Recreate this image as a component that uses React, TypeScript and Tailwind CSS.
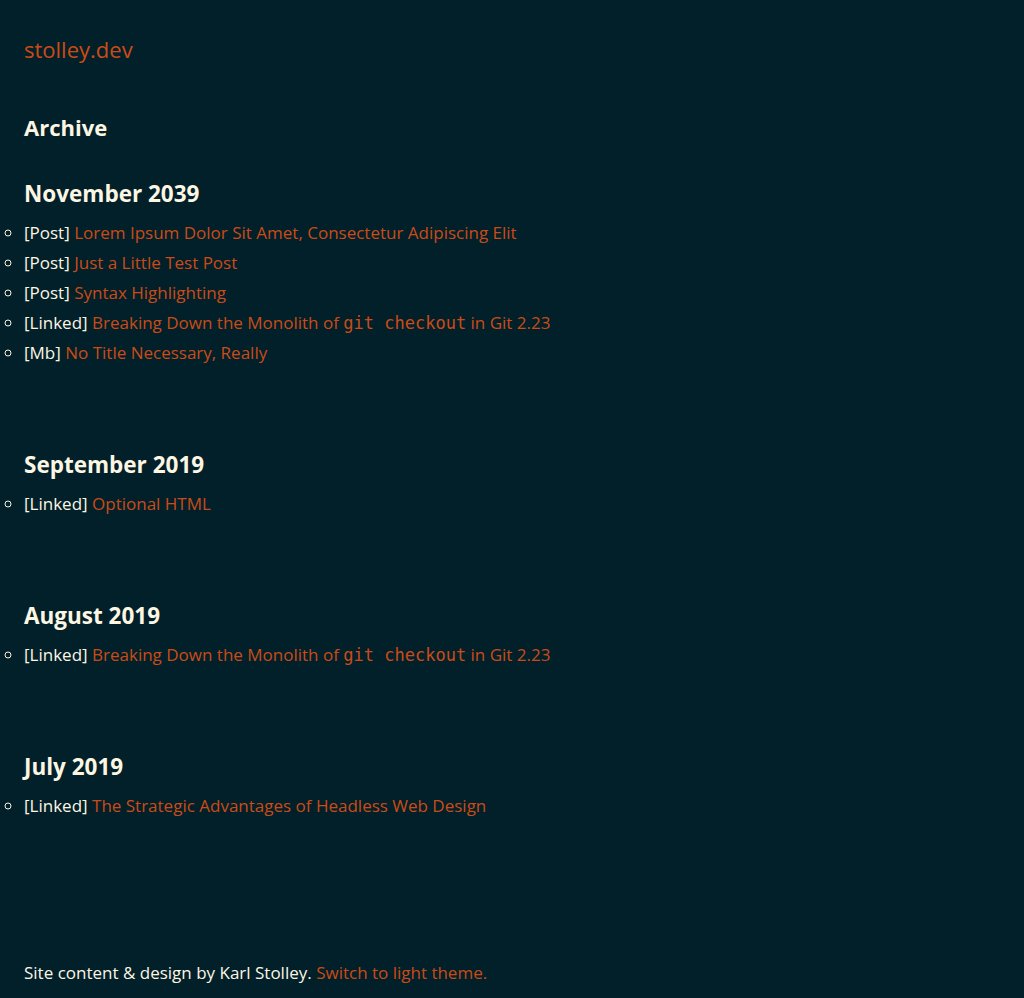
import React from "react";

interface Entry {
  kind: string;
  title: React.ReactNode;
}

interface Month {
  label: string;
  entries: Entry[];
}

const Code = ({ children }: { children: React.ReactNode }) => (
  <code className="font-['DejaVu_Sans_Mono',monospace] text-[17px]">{children}</code>
);

const monolith = (
  <>
    Breaking Down the Monolith of <Code>git checkout</Code> in Git 2.23
  </>
);

const months: Month[] = [
  {
    label: "November 2039",
    entries: [
      { kind: "Post", title: "Lorem Ipsum Dolor Sit Amet, Consectetur Adipiscing Elit" },
      { kind: "Post", title: "Just a Little Test Post" },
      { kind: "Post", title: "Syntax Highlighting" },
      { kind: "Linked", title: monolith },
      { kind: "Mb", title: "No Title Necessary, Really" },
    ],
  },
  {
    label: "September 2019",
    entries: [{ kind: "Linked", title: "Optional HTML" }],
  },
  {
    label: "August 2019",
    entries: [{ kind: "Linked", title: monolith }],
  },
  {
    label: "July 2019",
    entries: [{ kind: "Linked", title: "The Strategic Advantages of Headless Web Design" }],
  },
];

export default function App() {
  return (
    <div className="min-h-[998px] bg-[#01202a] text-[#fdf6e3] font-['Open_Sans',sans-serif] text-[17px] leading-[30px] px-6 pt-[34px] pb-[26px]">
      <header>
        <a href="#" className="text-[22px] leading-[30px] text-[#cb4b16]">
          stolley.dev
        </a>
      </header>

      <main>
        <h1 className="mt-[45px] text-[22px] leading-[30px] font-bold">Archive</h1>

        {months.map((month, i) => (
          <section key={month.label} className={i === 0 ? "mt-[37px]" : "mt-[82px]"}>
            <h2 className="text-[22.5px] leading-[30px] font-bold">{month.label}</h2>
            <ul className="mt-[9px] list-[circle] pl-0 -ml-6 [&>li]:ml-6">
              {month.entries.map((entry, j) => (
                <li key={j}>
                  [{entry.kind}]{" "}
                  <a href="#" className="text-[#cb4b16]">
                    {entry.title}
                  </a>
                </li>
              ))}
            </ul>
          </section>
        ))}
      </main>

      <footer className="mt-[137px]">
        Site content &amp; design by Karl Stolley.{" "}
        <a href="#" className="text-[#cb4b16]">
          Switch to light theme.
        </a>
      </footer>
    </div>
  );
}
